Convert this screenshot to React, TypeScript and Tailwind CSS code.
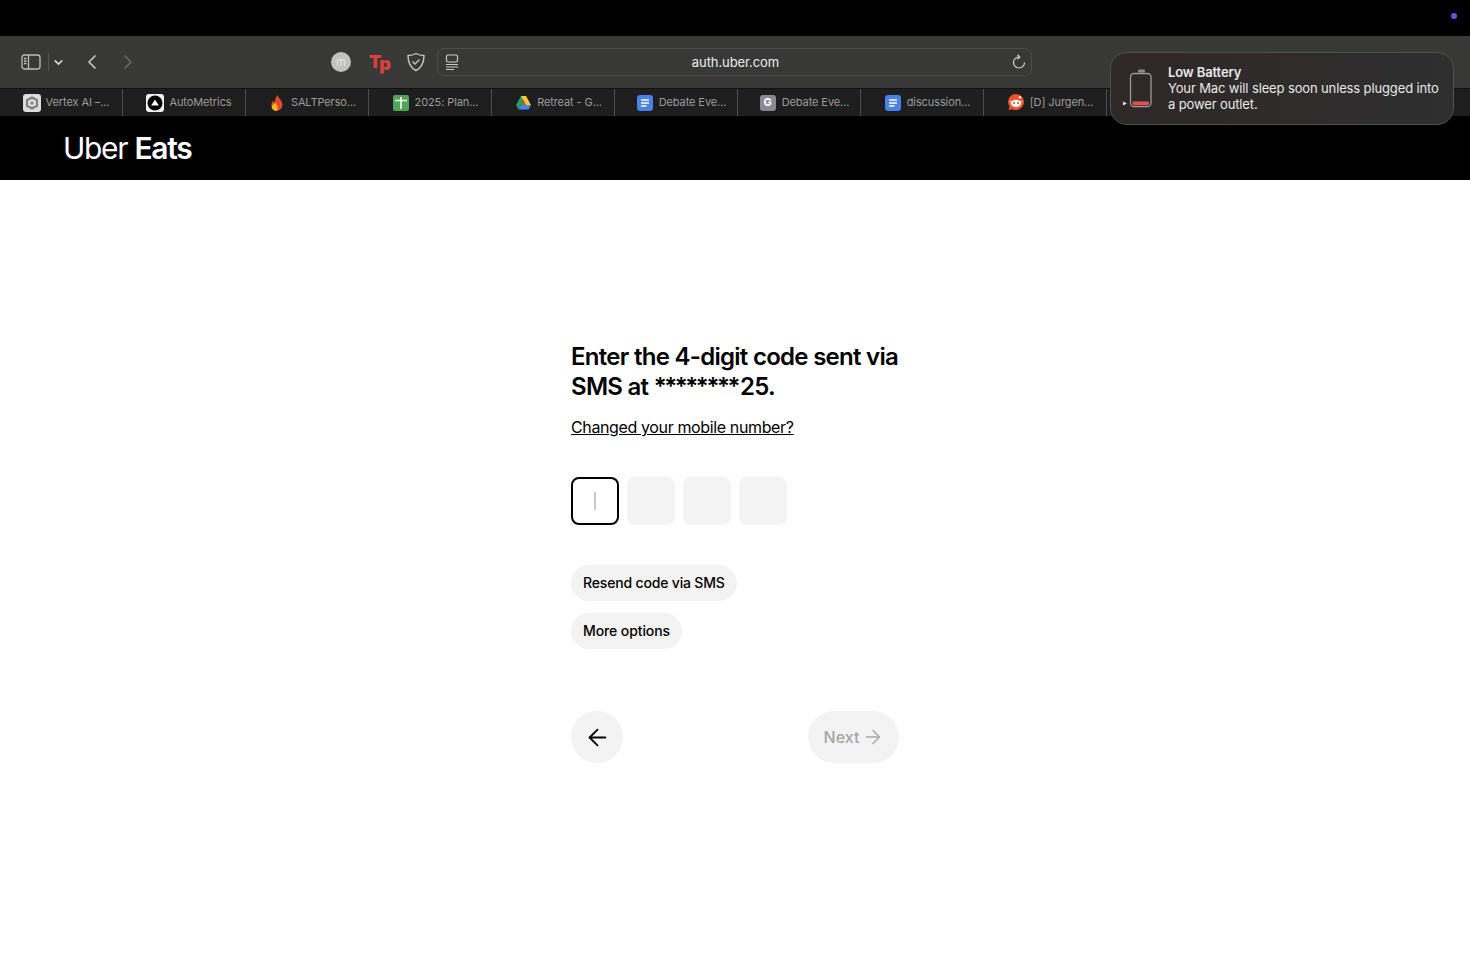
import React from 'react';
import { ArrowLeft, ArrowRight, ChevronDown, ChevronLeft, ChevronRight } from 'lucide-react';

const DocIcon = ({ color }: { color: string }) => (
  <svg width="16" height="16" viewBox="0 0 16 16">
    <rect width="16" height="16" rx="3" fill={color} />
    <path d="M4 5h8M4 8h8M4 11h5.5" stroke="#fff" strokeWidth="1.5" />
  </svg>
);

const tabs = [
  {
    title: 'Vertex AI –...',
    icon: (
      <svg width="18" height="18" viewBox="0 0 18 18">
        <rect width="18" height="18" rx="3" fill="#dcdcdc" />
        <path d="M9 3.5 14 6.2v5.6L9 14.5 4 11.8V6.2Z" fill="none" stroke="#7d7d7d" strokeWidth="2" />
        <circle cx="9" cy="9" r="1.6" fill="#7d7d7d" />
      </svg>
    ),
  },
  {
    title: 'AutoMetrics',
    icon: (
      <svg width="18" height="18" viewBox="0 0 18 18">
        <rect width="18" height="18" rx="3" fill="#f2f2f2" />
        <circle cx="9" cy="9" r="7.5" fill="#000" />
        <path d="M9 5.5 12.8 11.5H5.2Z" fill="#fff" />
      </svg>
    ),
  },
  {
    title: 'SALTPerso...',
    icon: (
      <svg width="14" height="16" viewBox="0 0 14 16">
        <path d="M7.5 0C8 3 12.5 5 12.5 10a5.5 5.5 0 0 1-11 0c0-2 1-3.5 2-4.5.2 1.2.8 2 1.5 2.2C4.800 4.500 6 2 7.500 0Z" fill="#e0492c" />
        <path d="M5 7.5C6.500 9.500 8 11 7.500 15.500a4 4 0 0 1-5.500-5C3 9.500 4.500 9 5 7.5Z" fill="#f8b51e" />
      </svg>
    ),
  },
  {
    title: '2025: Plan...',
    icon: (
      <svg width="16" height="16" viewBox="0 0 16 16">
        <rect width="16" height="16" rx="2" fill="#4ea457" />
        <path d="M2 5.500h12M8 2v12" stroke="#fff" strokeWidth="1.500" />
      </svg>
    ),
  },
  {
    title: 'Retreat - G...',
    icon: (
      <svg width="15" height="14" viewBox="0 0 15 14">
        <path d="M5 0h5L7.500 4.500 5 9 2.500 13.500 0 9Z" fill="#1ea362" />
        <path d="M5 0h5l5 9h-5Z" fill="#ffc82f" />
        <path d="M5 9h10l-2.500 4.500h-10Z" fill="#4385f4" />
        <path d="M5 9l2.500-4.500L10 9Z" fill="#d8503f" />
      </svg>
    ),
  },
  { title: 'Debate Eve...', icon: <DocIcon color="#4a80ea" /> },
  {
    title: 'Debate Eve...',
    icon: (
      <span className="flex h-4 w-4 items-center justify-center rounded-[3px] bg-[#8a8b92] text-[11px] font-bold text-white">G</span>
    ),
  },
  { title: 'discussion...', icon: <DocIcon color="#4a80ea" /> },
  {
    title: '[D] Jurgen...',
    icon: (
      <svg width="16" height="17" viewBox="0 0 16 17">
        <path d="M8 0a8 8 0 1 1-3.500 15.200L.5 16l1-3.500A8 8 0 0 1 8 0Z" fill="#f0512a" />
        <ellipse cx="8" cy="9.500" rx="5" ry="3.700" fill="#fff" />
        <circle cx="3.500" cy="8" r="1.200" fill="#fff" />
        <circle cx="12.500" cy="8" r="1.200" fill="#fff" />
        <circle cx="12" cy="3.200" r="1.200" fill="#fff" />
        <circle cx="6" cy="9" r="1" fill="#e0492c" />
        <circle cx="10" cy="9" r="1" fill="#e0492c" />
      </svg>
    ),
  },
];

const App = () => {
  return (
    <div className="flex min-h-screen flex-col bg-white font-['Inter',sans-serif]">
      <div className="flex h-9 items-center justify-end bg-black pr-[13px]">
        <span className="h-[6px] w-[6px] -translate-y-[2px] rounded-full bg-[#5e54ec]" />
      </div>

      {/* browser toolbar */}
      <div className="flex h-[52px] items-center bg-[#383837] pl-[21px] text-[#c9c9c9]">
        <svg width="20" height="16" viewBox="0 0 20 16" fill="none" stroke="#bdbdbd" strokeWidth="1.300">
          <rect x="1" y="1" width="18" height="14" rx="2.500" />
          <path d="M7.500 1v14" />
          <path d="M3 4.500h2.500M3 7h2.500M3 9.500h2.500" />
        </svg>
        <span className="ml-[7px] h-[18px] w-px bg-[#555]" />
        <ChevronDown className="ml-[3px] h-[13px] w-[13px]" strokeWidth={3} color="#d6d6d6" />
        <ChevronLeft className="ml-[15px] h-[24px] w-[24px]" strokeWidth={1.700} color="#c4c4c4" />
        <ChevronRight className="ml-[12px] h-[24px] w-[24px]" strokeWidth={1.700} color="#666" />
        <span className="ml-[191px] flex h-5 w-5 items-center justify-center rounded-full bg-[#c2c2c2] text-[11px] text-[#e4e4e4]">m</span>
        <span className="ml-[18px] flex w-[19px] text-[18px] font-black leading-none text-[#d9403a]">
          T<span className="-ml-[2px] translate-y-[2px]">p</span>
        </span>
        <svg className="ml-[18px]" width="20" height="20" viewBox="0 0 20 20" fill="none" stroke="#c4c4c4" strokeWidth="1.400">
          <path d="M10 1.500c2.500 1.500 5 2 8 2 0 7-2 12-8 15-6-3-8-8-8-15 3 0 5.500-.5 8-2Z" strokeLinejoin="round" />
          <path d="m6.500 9.500 2.500 2.500 4.500-4.500" />
        </svg>
        <div className="ml-[11px] flex h-7 w-[595px] items-center rounded-[7px] border border-[#4c4c4b] bg-[#383837] pl-[7px] pr-[5px]">
          <svg width="14" height="16" viewBox="0 0 14 16" fill="none" stroke="#c9c9c9" strokeWidth="1.200">
            <rect x="1.500" y="1" width="11" height="7" rx="1.500" />
            <path d="M1 10.500h12M1 13h12M1 15.500h8" />
          </svg>
          <span className="flex-1 pt-[1px] text-center text-[13px] tracking-[-0.08px] text-[#ececec]">auth.uber.com</span>
          <svg width="14" height="16" viewBox="0 0 14 16" fill="none" stroke="#d0d0d0" strokeWidth="1.200">
            <path d="M7 3a5.500 5.500 0 1 0 5.500 5.500" />
            <path d="M5.500 .8 7.800 3 5.500 5.200" />
          </svg>
        </div>
      </div>

      {/* tab strip */}
      <div className="flex h-7 border-t border-[#111] bg-[#1e1e1e]">
        {tabs.map((tab, i) => (
          <div key={i} className="flex w-[123px] shrink-0 items-center justify-center gap-[5px] border-r border-[#4d4d4d] pl-[10px] text-[11px] text-[#9c9c9c]">
            <span className="flex w-[18px] shrink-0 justify-center">{tab.icon}</span>
            <span className="whitespace-nowrap tracking-[-0.1px]">{tab.title}</span>
          </div>
        ))}
      </div>

      <header className="flex h-16 items-center bg-black pl-[63px] text-[30px] leading-none tracking-[-1.3px] text-white">
        <span className="font-normal">Uber&nbsp;</span>
        <span className="font-semibold">Eats</span>
      </header>

      <main className="flex flex-1 justify-center pt-[162px]">
        <div className="w-[328px]">
          <h1 className="text-[24px] font-semibold leading-[30px] tracking-[-0.72px] text-black">
            Enter the 4-digit code sent via
            <br />
            SMS at <span className="tracking-[-2.4px]">********</span>
            <span className="ml-[2px]">25.</span>
          </h1>
          <a className="mt-[13px] block text-[16px] leading-6 tracking-[-0.37px] text-black underline">Changed your mobile number?</a>
          <div className="mt-[38px] flex gap-2">
            <div className="flex h-12 w-12 items-center justify-center rounded-lg border-2 border-black">
              <span className="h-[18px] w-[2px] bg-[#c8c8c8]" />
            </div>
            <div className="h-12 w-12 rounded-lg bg-[#f3f3f3]" />
            <div className="h-12 w-12 rounded-lg bg-[#f3f3f3]" />
            <div className="h-12 w-12 rounded-lg bg-[#f3f3f3]" />
          </div>
          <div className="mt-10 flex flex-col items-start gap-3">
            <button className="h-9 rounded-full bg-[#f3f3f3] px-3 pb-[1px] text-[14px] font-medium tracking-[-0.17px] text-black">Resend code via SMS</button>
            <button className="h-9 rounded-full bg-[#f3f3f3] px-3 pb-[1px] text-[14px] font-medium tracking-[-0.1px] text-black">More options</button>
          </div>
          <div className="mt-[62px] flex items-center justify-between">
            <button className="flex h-[52px] w-[52px] items-center justify-center rounded-full bg-[#f3f3f3]">
              <ArrowLeft className="h-[27px] w-[27px]" strokeWidth={1.600} color="#000" />
            </button>
            <button className="flex h-[52px] w-[91px] items-center justify-center gap-[3px] rounded-full bg-[#f3f3f3] pl-[1px] text-[16px] font-medium text-[#a6a6a6]">
              Next
              <ArrowRight className="h-[22px] w-[22px]" strokeWidth={1.500} color="#a6a6a6" />
            </button>
          </div>
        </div>
      </main>

      {/* low battery notification */}
      <div className="absolute left-[1110px] top-[52px] flex h-[73px] w-[344px] items-center rounded-[17px] border border-[#505050] bg-linear-to-r from-[#2e2827] to-[#2f2f2f] pl-[12px] text-[13px] leading-4 tracking-[-0.13px] text-[#e8e8e8]">
        <svg width="34" height="42" viewBox="0 0 34 42" fill="none">
          <path d="M0 33.500l4 2-4 2Z" fill="#ddd" />
          <rect x="15" y="1.500" width="7" height="3" rx="1.200" fill="#8a8a8a" />
          <rect x="7.500" y="5.500" width="20.500" height="33" rx="3.500" stroke="#9a9a9a" strokeWidth="1.300" />
          <rect x="9.500" y="33.500" width="16.500" height="3.500" rx="1" fill="#e5504a" />
        </svg>
        <div className="ml-[11px] pb-[2px]">
          <div className="font-semibold">Low Battery</div>
          <div>Your Mac will sleep soon unless plugged into</div>
          <div>a power outlet.</div>
        </div>
      </div>
    </div>
  );
};

export default App;
